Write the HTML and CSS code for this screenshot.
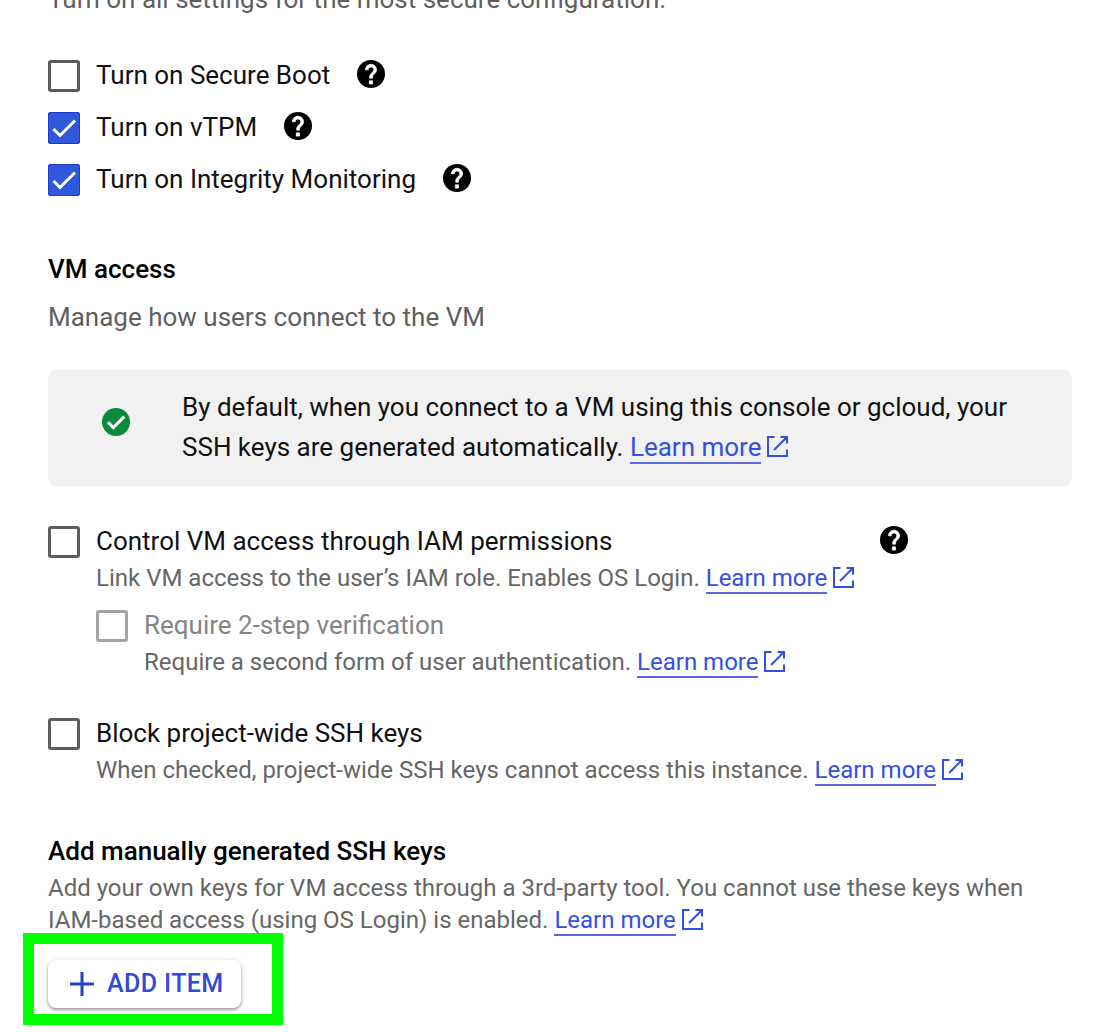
FILE: index.html
```html
<!DOCTYPE html>
<html lang="en">
<head>
<meta charset="utf-8">
<title>VM security and access</title>
<link rel="stylesheet" href="styles.css">
</head>
<body>
<svg class="defs" width="0" height="0" aria-hidden="true">
  <symbol id="help" viewBox="2 2 20 20"><circle cx="12" cy="12" r="10" fill="#000"/><path fill="#fff" stroke="#fff" stroke-width=".5" d="M13.1 19.2h-2.3v-2.3h2.3zM15.07 11.25l-.9.92C13.45 12.9 13 13.5 13 15h-2v-.5c0-1.1.45-2.1 1.17-2.83l1.24-1.26c.37-.36.59-.86.59-1.41 0-1.1-.9-2-2-2s-2 .9-2 2H8c0-2.21 1.79-4 4-4s4 1.79 4 4c0 .88-.36 1.68-.93 2.25z"/></symbol>
  <symbol id="open" viewBox="0 0 21 21"><path fill="none" stroke="#3350e0" stroke-width="2" d="M7.5 1H1v19h19v-6.500M13.500 1H20v6.500M19.500 1.500L7 14"/><path fill="#3350e0" d="M16 1h4v4z"/></symbol>
  <symbol id="tick" viewBox="0 0 32 32"><path fill="none" stroke="#fff" stroke-width="3" d="M5.500 17l6.500 6.500L27 8.500"/></symbol>
</svg>
<main class="panel">
  <p class="lead">Turn on all settings for the most secure configuration.</p>

  <div class="options">
    <label class="option"><span class="box"></span><span>Turn on Secure Boot</span><svg class="help"><use href="#help"/></svg></label>
    <label class="option"><span class="box checked"><svg><use href="#tick"/></svg></span><span>Turn on vTPM</span><svg class="help"><use href="#help"/></svg></label>
    <label class="option"><span class="box checked"><svg><use href="#tick"/></svg></span><span>Turn on Integrity Monitoring</span><svg class="help"><use href="#help"/></svg></label>
  </div>

  <h2 class="heading access">VM access</h2>
  <p class="subtitle">Manage how users connect to the VM</p>

  <div class="banner">
    <svg class="success" viewBox="0 0 28 28"><circle cx="14" cy="14" r="14" fill="#0b8a3a"/><path fill="none" stroke="#fff" stroke-width="3" d="M6 14.3l5.3 5.3L22.3 8.6"/></svg>
    <p>By default, when you connect to a VM using this console or gcloud, your<br>SSH keys are generated automatically. <a class="link">Learn more</a><svg class="open"><use href="#open"/></svg></p>
  </div>

  <div class="field iam">
    <span class="box"></span>
    <div class="body">
      <div class="title wide"><span>Control VM access through IAM permissions</span><svg class="help"><use href="#help"/></svg></div>
      <p class="hint">Link VM access to the user’s IAM role. Enables OS Login. <a class="link">Learn more</a><svg class="open"><use href="#open"/></svg></p>
      <div class="field nested">
        <span class="box"></span>
        <div class="body">
          <div class="title">Require 2-step verification</div>
          <p class="hint">Require a second form of user authentication. <a class="link">Learn more</a><svg class="open"><use href="#open"/></svg></p>
        </div>
      </div>
    </div>
  </div>

  <div class="field block">
    <span class="box"></span>
    <div class="body">
      <div class="title">Block project-wide SSH keys</div>
      <p class="hint">When checked, project-wide SSH keys cannot access this instance. <a class="link">Learn more</a><svg class="open"><use href="#open"/></svg></p>
    </div>
  </div>

  <h2 class="heading keys">Add manually generated SSH keys</h2>
  <p class="hint keys-hint">Add your own keys for VM access through a 3rd-party tool. You cannot use these keys when<br>IAM-based access (using OS Login) is enabled. <a class="link">Learn more</a><svg class="open"><use href="#open"/></svg></p>

  <div class="action">
    <button class="add"><svg viewBox="0 0 24 24"><path stroke="#2440cc" stroke-width="3" d="M0 12h24M12 0v24"/></svg><span>ADD ITEM</span></button>
    <span class="highlight"></span>
  </div>
</main>
</body>
</html>
```

FILE: styles.css
```css
* { box-sizing: border-box; }
body {
  margin: 0;
  background: #fff;
  color: #111;
  font: 400 26px/40px Roboto, sans-serif;
  overflow: hidden;
}
p, h2 { margin: 0; white-space: nowrap; }
svg { display: block; flex: none; }
.defs { position: absolute; }

.panel {
  height: 1032px;
  padding: 0 26px 0 48px;
  overflow: hidden;
}
.lead { height: 49px; margin-top: -21px; margin-bottom: 21px; color: #5f5f5f; }

.option { display: flex; align-items: center; height: 52px; }
.option .help { margin: -2px 0 0 27px; }
.help { width: 28px; height: 28px; }

.box {
  flex: none;
  width: 32px;
  height: 32px;
  margin-right: 16px;
  border: 3px solid #5c5c5c;
  border-radius: 3px;
}
.option .box { position: relative; top: 1px; }
.box.checked { border: 0; background: #3058dc; box-shadow: inset 0 0 0 1px #2038c8; }
.box.checked svg { width: 32px; height: 32px; }

.heading { font-size: 26px; font-weight: 500; line-height: 40px; color: #000; }
.access { margin-top: 44px; }
.subtitle { margin-top: 8px; color: #5f5f5f; }

.banner {
  display: flex;
  height: 116px;
  margin-top: 33px;
  padding: 17px 0 0 54px;
  background: #f1f1f1;
  border-radius: 8px;
}
.success { width: 28px; height: 28px; margin: 21px 52px 0 0; }

.link { color: #3350e0; border-bottom: 2px solid #5c68de; }
.open { display: inline-block; width: 21px; height: 21px; margin-left: 6px; vertical-align: -1px; }

.field { display: flex; align-items: flex-start; }
.field > .box { margin-top: 5px; }
.iam { margin-top: 35px; }
.title { height: 41px; }
.wide { display: flex; justify-content: space-between; width: 812px; }
.wide .help { margin-top: 5px; }
.hint { font-size: 24px; line-height: 32px; color: #666; }
.hint .open { vertical-align: -2px; }
.nested { margin-top: 11px; }
.nested .title { color: #858585; }
.nested > .box { border-color: #a3a3a3; }
.block { margin-top: 35px; }
.keys { margin-top: 45px; }
.keys-hint { margin-top: 1px; }

.action { position: relative; width: 193px; margin-top: 24px; }
.add {
  display: flex;
  align-items: center;
  width: 193px;
  height: 48px;
  padding: 0 0 0 22px;
  border: 0;
  border-radius: 8px;
  background: #fff;
  color: #2f4bd8;
  font: 500 25px/48px Roboto, sans-serif;
  letter-spacing: 0.4px;
  white-space: nowrap;
  box-shadow: 0 2px 3px rgba(0, 0, 0, .32), 0 1px 6px rgba(0, 0, 0, .14);
}
.add svg { width: 24px; height: 24px; margin-right: 13px; }
.highlight {
  position: absolute;
  top: -27px;
  left: -25px;
  width: 260px;
  height: 92px;
  border: 11px solid #0f0;
}
```
